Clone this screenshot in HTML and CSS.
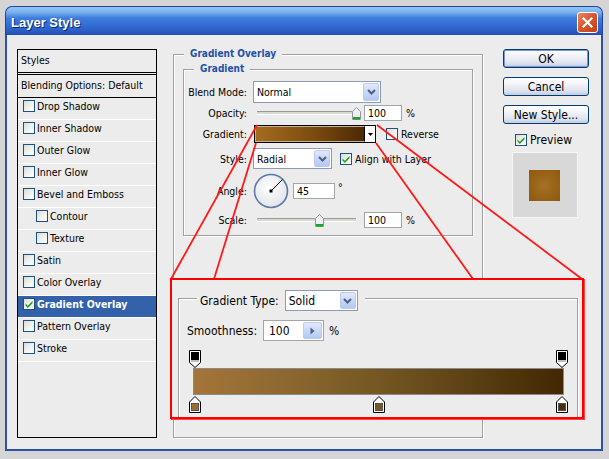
FILE: index.html
```html
<!DOCTYPE html>
<html>
<head>
<meta charset="utf-8">
<title>Layer Style</title>
<link rel="stylesheet" href="styles.css">
</head>
<body>
<div class="screen">
  <div class="window">
    <div class="titlebar">
      <span class="title">Layer Style</span>
      <span class="close"><svg width="19" height="19" viewBox="0 0 19 19"><path d="M5.5 5.5 L13.5 13.5 M13.5 5.5 L5.5 13.5" stroke="#fff" stroke-width="2.2" stroke-linecap="square"/></svg></span>
    </div>
    <div class="body">
      <div class="styles-list">
        <div class="sl-head">Styles</div>
        <div class="sl-blend">Blending Options: Default</div>
        <div class="sl-item"><span class="cb"></span>Drop Shadow</div>
        <div class="sl-item"><span class="cb"></span>Inner Shadow</div>
        <div class="sl-item"><span class="cb"></span>Outer Glow</div>
        <div class="sl-item"><span class="cb"></span>Inner Glow</div>
        <div class="sl-item"><span class="cb"></span>Bevel and Emboss</div>
        <div class="sl-item sub"><span class="cb"></span>Contour</div>
        <div class="sl-item sub"><span class="cb"></span>Texture</div>
        <div class="sl-item"><span class="cb"></span>Satin</div>
        <div class="sl-item"><span class="cb"></span>Color Overlay</div>
        <div class="sl-item selected"><span class="cb"><svg width="10" height="10" viewBox="0 0 10 10"><path d="M1.5 4.5 L3.8 6.8 L8.5 2 L8.5 4.2 L3.8 8.9 L1.5 6.6 Z" fill="#21a121"/></svg></span>Gradient Overlay</div>
        <div class="sl-item"><span class="cb"></span>Pattern Overlay</div>
        <div class="sl-item"><span class="cb"></span>Stroke</div>
      </div>

      <fieldset class="group outer">
        <legend>Gradient Overlay</legend>
        <fieldset class="group inner">
          <legend>Gradient</legend>
          <div class="row r-blend">
            <span class="lbl">Blend Mode:</span>
            <div class="combo combo-blend">
              <span class="combo-text">Normal</span>
              <span class="combo-btn"><svg width="9" height="6" viewBox="0 0 9 6"><path d="M1 1 L4.5 4.5 L8 1" fill="none" stroke="#4d6185" stroke-width="2"/></svg></span>
            </div>
          </div>
          <div class="row r-opacity">
            <span class="lbl">Opacity:</span>
            <div class="slider">
              <svg class="thumb thumb-opacity" width="9" height="13" viewBox="0 0 9 13"><path d="M0.5 4.5 L4.5 0.5 L8.5 4.5 V12.5 H0.5 Z" fill="#eef0f2" stroke="#8a98a6"/><rect x="1" y="10" width="7" height="2.5" fill="#21a121"/></svg>
            </div>
            <span class="field field-pct">100</span>
            <span class="unit">%</span>
          </div>
          <div class="row r-gradient">
            <span class="lbl">Gradient:</span>
            <div class="grad-swatch">
              <span class="grad-fill"></span>
              <span class="grad-arrow"><svg width="5" height="3" viewBox="0 0 5 3"><path d="M0 0 H5 L2.5 3 Z" fill="#000"/></svg></span>
            </div>
            <span class="cb cb-reverse"></span>
            <span class="cb-text">Reverse</span>
          </div>
          <div class="row r-style">
            <span class="lbl">Style:</span>
            <div class="combo combo-style">
              <span class="combo-text">Radial</span>
              <span class="combo-btn"><svg width="9" height="6" viewBox="0 0 9 6"><path d="M1 1 L4.5 4.5 L8 1" fill="none" stroke="#4d6185" stroke-width="2"/></svg></span>
            </div>
            <span class="cb cb-align"><svg width="10" height="10" viewBox="0 0 10 10"><path d="M1.5 4.5 L3.8 6.8 L8.5 2 L8.5 4.2 L3.8 8.9 L1.5 6.6 Z" fill="#21a121"/></svg></span>
            <span class="cb-text">Align with Layer</span>
          </div>
          <div class="row r-angle">
            <span class="lbl">Angle:</span>
            <svg class="dial" width="36" height="36" viewBox="0 0 36 36">
              <defs><radialGradient id="dg" cx="45%" cy="40%" r="60%"><stop offset="0" stop-color="#ffffff"/><stop offset="1" stop-color="#e2e4e8"/></radialGradient></defs>
              <circle cx="18" cy="18" r="16.5" fill="url(#dg)" stroke="#5b79a6" stroke-width="1.6"/>
              <line x1="18" y1="18" x2="29.5" y2="6.5" stroke="#000" stroke-width="1"/>
              <rect x="16.5" y="16.5" width="3" height="3" fill="#000"/>
            </svg>
            <span class="field field-angle">45</span>
            <span class="deg">°</span>
          </div>
          <div class="row r-scale">
            <span class="lbl">Scale:</span>
            <div class="slider">
              <svg class="thumb thumb-scale" width="9" height="13" viewBox="0 0 9 13"><path d="M0.5 4.5 L4.5 0.5 L8.5 4.5 V12.5 H0.5 Z" fill="#eef0f2" stroke="#8a98a6"/><rect x="1" y="10" width="7" height="2.5" fill="#21a121"/></svg>
            </div>
            <span class="field field-pct">100</span>
            <span class="unit">%</span>
          </div>
        </fieldset>
      </fieldset>

      <div class="buttons">
        <div class="btn btn-default">OK</div>
        <div class="btn">Cancel</div>
        <div class="btn">New Style...</div>
        <div class="preview-row">
          <span class="cb"><svg width="10" height="10" viewBox="0 0 10 10"><path d="M1.5 4.5 L3.8 6.8 L8.5 2 L8.5 4.2 L3.8 8.9 L1.5 6.6 Z" fill="#21a121"/></svg></span>
          <span class="preview-text">Preview</span>
        </div>
        <div class="preview-box"><div class="preview-swatch"></div></div>
      </div>
    </div>
  </div>

  <svg class="callout-lines" width="609" height="459" viewBox="0 0 609 459">
    <g stroke="#ff1a1a" stroke-width="1.8" fill="none">
      <line x1="257" y1="125" x2="171" y2="279"/>
      <line x1="256" y1="143" x2="214" y2="279"/>
      <line x1="377" y1="125" x2="582" y2="279"/>
      <line x1="376" y1="143" x2="473" y2="279"/>
    </g>
  </svg>

  <div class="callout">
    <fieldset class="group zoomed">
      <legend><span class="legend-row"><span>Gradient Type:</span>
        <span class="combo combo-type">
          <span class="combo-text">Solid</span>
          <span class="combo-btn"><svg width="9" height="6" viewBox="0 0 9 6"><path d="M1 1 L4.5 4.5 L8 1" fill="none" stroke="#4d6185" stroke-width="2"/></svg></span>
        </span></span></legend>
      <div class="smooth-row">
        <span class="smooth-lbl">Smoothness:</span>
        <span class="spin">
          <span class="spin-text">100</span>
          <span class="spin-btn"><svg width="5" height="8" viewBox="0 0 5 8"><path d="M0.5 0.5 L4.5 4 L0.5 7.5 Z" fill="#4d6185"/></svg></span>
        </span>
        <span class="smooth-unit">%</span>
      </div>
      <div class="stops stops-top">
        <svg width="12" height="18" viewBox="0 0 12 18"><path d="M0.5 0.5 H11.5 V12.5 L6 17.5 L0.5 12.5 Z" fill="#fff" stroke="#000"/><rect x="2" y="2" width="8" height="8" fill="#000"/><rect x="2" y="10" width="8" height="2" fill="#bdbdbd"/></svg>
        <svg width="12" height="18" viewBox="0 0 12 18"><path d="M0.5 0.5 H11.5 V12.5 L6 17.5 L0.5 12.5 Z" fill="#fff" stroke="#000"/><rect x="2" y="2" width="8" height="8" fill="#000"/><rect x="2" y="10" width="8" height="2" fill="#bdbdbd"/></svg>
      </div>
      <div class="grad-bar"></div>
      <div class="stops stops-bottom">
        <svg width="12" height="17" viewBox="0 0 12 17"><path d="M6 0.5 L11.5 6 V16.5 H0.5 V6 Z" fill="#fff" stroke="#000"/><rect x="2.5" y="7.5" width="7" height="7" fill="#9c6e32" stroke="#555"/></svg>
        <svg width="12" height="17" viewBox="0 0 12 17"><path d="M6 0.5 L11.5 6 V16.5 H0.5 V6 Z" fill="#fff" stroke="#000"/><rect x="2.5" y="7.5" width="7" height="7" fill="#775820" stroke="#555"/></svg>
        <svg width="12" height="17" viewBox="0 0 12 17"><path d="M6 0.5 L11.5 6 V16.5 H0.5 V6 Z" fill="#fff" stroke="#000"/><rect x="2.5" y="7.5" width="7" height="7" fill="#4a2c08" stroke="#555"/></svg>
      </div>
    </fieldset>
  </div>
</div>
</body>
</html>
```

FILE: styles.css
```css
* { box-sizing: border-box; }

html, body {
  margin: 0;
  padding: 0;
}

body {
  width: 609px;
  height: 459px;
  overflow: hidden;
  background: #d5d5d5;
  font-family: "DejaVu Sans Condensed", "DejaVu Sans", sans-serif;
  font-stretch: condensed;
  font-size: 10.5px;
  color: #000;
}

.screen {
  position: relative;
  width: 609px;
  height: 459px;
  padding: 6px 0 0 5px;
}

.window {
  width: 598px;
  display: flex;
  flex-direction: column;
}

/* ---------- title bar ---------- */
.titlebar {
  height: 29px;
  display: flex;
  align-items: center;
  justify-content: space-between;
  padding: 3px 4px 0 5px;
  border-radius: 7px 7px 0 0;
  border: 1px solid #1d43a6;
  border-bottom: none;
  background: linear-gradient(to bottom,
    #93c4f5 0px, #7cb4f0 5px, #5d98e6 8px, #3d7ddc 11px,
    #356fd4 17px, #2d60c6 23px, #2552b8 27px, #1e47a8 29px);
}

.title {
  font-family: "Liberation Sans", Arial, sans-serif;
  font-stretch: normal;
  font-weight: bold;
  font-size: 13px;
  color: #fff;
  text-shadow: 1px 1px 0 #0c2a78;
}

.close {
  width: 21px;
  height: 21px;
  border: 1px solid #fff;
  border-radius: 3px;
  background: linear-gradient(135deg, #e98a6c 0%, #d8582f 45%, #c2411a 100%);
  display: flex;
  align-items: center;
  justify-content: center;
}

/* ---------- body ---------- */
.body {
  height: 416px;
  display: flex;
  align-items: flex-start;
  padding: 12px 0 0 10px;
  background: #ececec;
  border: solid #2b50b0;
  border-width: 0 2px 2px 2px;
}

/* ---------- styles list ---------- */
.styles-list {
  width: 140px;
  height: 389px;
  margin-top: 2px;
  border: 1px solid #000;
  background: #ececec;
}

.sl-head {
  height: 25px;
  padding-left: 3px;
  line-height: 21px;
  border-bottom: 3px double #000;
}

.sl-blend {
  height: 23px;
  padding-left: 3px;
  line-height: 20px;
  border-bottom: 1px solid #000;
}

.sl-item {
  height: 22px;
  display: flex;
  align-items: center;
  padding-left: 5px;
  padding-bottom: 5px;
  border-bottom: 1px solid #fff;
}

.sl-item.sub { padding-left: 18px; }

.sl-item.selected {
  background: #3462aa;
  color: #fff;
  font-weight: bold;
}

.cb {
  width: 12px;
  height: 12px;
  flex: none;
  margin-right: 2px;
  border: 1px solid #1c5180;
  background: linear-gradient(135deg, #dcdcd6 0%, #f4f4f2 60%, #ffffff 100%);
  display: inline-flex;
  align-items: center;
  justify-content: center;
}

/* ---------- etched group boxes ---------- */
.group {
  margin: 0;
  min-width: 0;
  border: 1px solid #a0a0a0;
  box-shadow: inset 1px 1px 0 #fff, 1px 1px 0 #fff;
}

.group > legend {
  background: #ececec;
  padding: 0 6px;
  line-height: 14px;
  font-weight: bold;
  font-size: 10px;
  color: #1f50a8;
}

.outer {
  width: 310px;
  height: 391px;
  margin-left: 16px;
  padding: 0 9px;
}

.outer > legend { margin-left: 1px; }

.inner {
  width: 290px;
  height: 174px;
  margin-top: 1px;
  padding: 0 9px 0 4px;
}

.inner > legend { margin-left: 6px; }

/* ---------- rows ---------- */
.row {
  display: flex;
  align-items: center;
}

.lbl {
  width: 59px;
  flex: none;
  margin-right: 6px;
  text-align: right;
  white-space: nowrap;
}

.r-blend   { margin-top: 5px; height: 22px; }
.r-opacity { margin-top: 2px; height: 16px; }
.r-gradient{ margin-top: 4px; height: 18px; }
.r-style   { margin-top: 5px; height: 21px; }
.r-angle   { margin-top: 4px; height: 36px; }
.r-scale   { margin-top: 3px; height: 16px; }

.combo {
  display: flex;
  height: 22px;
  border: 1px solid #8e9cb2;
  background: #fff;
}

.combo-blend { width: 128px; }
.combo-style { width: 79px; height: 21px; }

.combo-text {
  flex: 1;
  padding-left: 3px;
  align-self: center;
}

.combo-btn {
  width: 16px;
  margin: 1px;
  border: 1px solid #bccbee;
  border-radius: 2px;
  background: linear-gradient(to bottom, #e2eafc 0%, #c6d6f7 55%, #b3c9f3 100%);
  display: flex;
  align-items: center;
  justify-content: center;
}

.slider {
  width: 104px;
  height: 16px;
  margin-left: 4px;
  display: flex;
  align-items: center;
  background:
    linear-gradient(#9a9a9a, #9a9a9a) 0 6px / 99px 1px no-repeat,
    linear-gradient(#d9d9d2, #d9d9d2) 0 7px / 99px 2px no-repeat,
    linear-gradient(#ffffff, #ffffff) 0 9px / 99px 1px no-repeat;
}

.thumb { flex: none; }
.thumb-opacity { margin-left: 95px; }
.thumb-scale { margin-left: 58px; }

.field {
  height: 16px;
  border: 1px solid #a5a5a5;
  background: #fff;
  padding-left: 3px;
  line-height: 14px;
}

.field-pct { width: 38px; margin-left: 3px; }
.field-angle { width: 42px; margin-left: 4px; }

.unit { margin-left: 4px; }

.deg {
  align-self: flex-start;
  margin-top: 8px;
  margin-left: 3px;
}

.grad-swatch {
  display: flex;
  width: 122px;
  height: 18px;
  margin-left: 1px;
  border: 1px solid #000;
}

.grad-fill {
  flex: 1;
  border: 1px solid #c9b08a;
  border-right: 1px solid #000;
  background: linear-gradient(to right, #a36b1f 0%, #7e4e0f 50%, #4b2a05 100%);
}

.grad-arrow {
  width: 10px;
  background: #fff;
  display: flex;
  align-items: center;
  justify-content: center;
}

.cb-reverse { margin-left: 10px; }
.cb-align { margin-left: 8px; }
.cb-text { margin-left: 1px; }

.dial { flex: none; }

/* ---------- buttons column ---------- */
.buttons {
  margin-left: 20px;
  margin-top: 2px;
  display: flex;
  flex-direction: column;
  width: 86px;
}

.btn {
  width: 86px;
  height: 19px;
  margin-bottom: 9px;
  border: 1px solid #003c74;
  border-radius: 3px;
  background: linear-gradient(to bottom, #ffffff 0%, #f3f4f8 35%, #dde3ef 75%, #c3cde2 100%);
  display: flex;
  align-items: center;
  justify-content: center;
  font-size: 12px;
}

.btn-default {
  box-shadow: inset 0 0 0 1px #7896d8;
}

.preview-row {
  margin-top: 0;
  height: 13px;
  display: flex;
  align-items: center;
  padding-left: 12px;
}

.preview-text {
  font-size: 12px;
  margin-left: 1px;
}

.preview-box {
  width: 66px;
  height: 66px;
  margin-top: 6px;
  margin-left: 9px;
  padding: 17px 0 0 16px;
  background: #d8d8d8;
  border: 1px solid #f6f6f6;
}

.preview-swatch {
  width: 31px;
  height: 31px;
  background: radial-gradient(circle, #a3722a 0%, #9a6518 45%, #8d5a0c 100%);
}

/* ---------- callout ---------- */
.callout-lines {
  position: absolute;
  left: 0;
  top: 0;
}

.callout {
  position: absolute;
  left: 170px;
  top: 278px;
  width: 414px;
  height: 141px;
  border: 2px solid #ff0000;
  box-shadow: 1px 1px 0 #f44;
  background: #ececec;
  overflow: hidden;
  font-size: 12px;
}

.zoomed {
  width: 400px;
  height: 200px;
  margin: 6px 0 0 6px;
  padding: 0 0 0 8px;
}

.zoomed > legend {
  margin-left: 10px;
  padding: 4px 7px 0 3px;
  font-weight: normal;
  font-size: 12px;
  color: #000;
  line-height: normal;
}

.legend-row {
  display: flex;
  align-items: center;
}

.combo-type {
  width: 73px;
  height: 21px;
  margin-left: 6px;
}

.smooth-row {
  margin-top: 9px;
  height: 21px;
  display: flex;
  align-items: center;
}

.smooth-lbl { width: 76px; }

.spin {
  display: flex;
  width: 61px;
  height: 21px;
  border: 1px solid #a5a5a5;
  background: #fff;
}

.spin-text {
  flex: 1;
  align-self: center;
  padding-left: 5px;
}

.spin-btn {
  width: 19px;
  margin: 1px;
  border: 1px solid #bccbee;
  border-radius: 2px;
  background: linear-gradient(to bottom, #e2eafc 0%, #c6d6f7 55%, #b3c9f3 100%);
  display: flex;
  align-items: center;
  justify-content: center;
}

.smooth-unit { margin-left: 5px; }

.stops {
  display: flex;
  justify-content: space-between;
  width: 379px;
  margin-left: 2px;
}

.stops-top { margin-top: 9px; height: 18px; }
.stops-bottom { margin-top: 1px; height: 17px; }

.grad-bar {
  width: 371px;
  height: 27px;
  margin-left: 6px;
  border: 1px solid #8b8b8b;
  background: linear-gradient(to right, #a47539 0%, #8c6830 25%, #745722 50%, #5b4014 75%, #432703 100%);
}
```
